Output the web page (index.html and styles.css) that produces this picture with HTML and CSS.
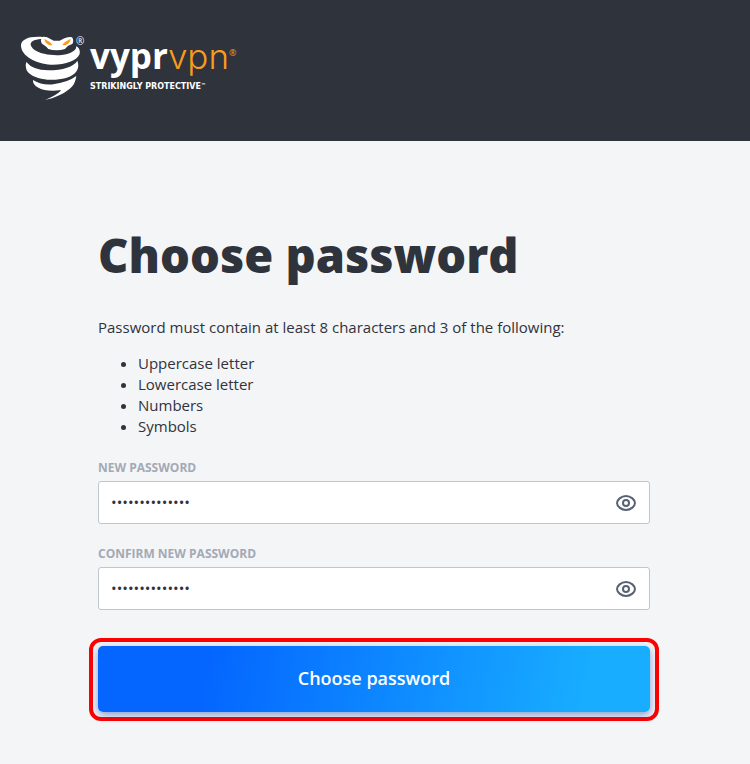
FILE: index.html
```html
<!DOCTYPE html>
<html lang="en">
<head>
<meta charset="utf-8">
<meta name="viewport" content="width=device-width, initial-scale=1">
<title>Choose password</title>
<link rel="stylesheet" href="styles.css">
</head>
<body>
<header class="header">
  <a class="logo" href="#" aria-label="VyprVPN">
    <svg class="logo-mark" viewBox="0 0 225 225" aria-hidden="true">
      <g fill="#fff">
        <path d="M84 21C42 18 17 28 18 48C20 78 62 102 108 104C150 105 186 92 194 72C196 60 192 52 183 49C187 60 168 72 140 75C112 78 76 72 60 61C42 48 44 36 58 31C66 28 76 27 84 27Z"/>
        <path d="M82 21Q94 19 105 26L116 32H134L145 26Q160 19 171 22Q178 31 172 42C160 46 156 50 150 57Q138 61 125 61Q111 61 100 57C94 49 87 45 81 41Q74 31 82 21Z"/>
        <path d="M34 96Q53 120 99 121C144 121 176 110 187 92C196 115 184 134 153 144C101 158 36 143 33 113Q31 104 34 96Z"/>
        <path d="M54 150Q84 168 119 162Q158 157 184 138C181 158 174 171 158 181C143 193 119 204 91 210C116 198 132 190 138 180C91 189 50 171 54 150Z"/>
      </g>
      <path fill="#f89c1c" d="M88 26Q90 39 101 44Q108 47 112 44Q104 34 88 26ZM167 26Q165 39 154 44Q147 47 142 44Q150 34 167 26Z"/>
    </svg>
    <span class="logo-text">
      <span class="logo-name"><span class="logo-reg-small">®</span><b class="logo-vypr">vypr</b><span class="logo-vpn">vpn</span><span class="logo-reg">®</span></span>
      <span class="logo-tagline">STRIKINGLY PROTECTIVE<span class="tagline-mark">™</span></span>
    </span>
  </a>
</header>
<main class="main">
  <h1 class="title">Choose password</h1>
  <p class="intro">Password must contain at least 8 characters and 3 of the following:</p>
  <ul class="rules">
    <li>Uppercase letter</li>
    <li>Lowercase letter</li>
    <li>Numbers</li>
    <li>Symbols</li>
  </ul>
  <form class="form">
    <div class="field">
      <label class="label" for="new-password">NEW PASSWORD</label>
      <div class="control">
        <input class="input" id="new-password" type="password" value="abcdefghijklmn">
        <button class="reveal" type="button" aria-label="Show new password">
          <svg viewBox="0 0 24 24" aria-hidden="true"><path d="M3 12C3 9 7 5 12 5S21 9 21 12S17 19 12 19S3 15 3 12Z"/><circle cx="12" cy="12" r="3"/></svg>
        </button>
      </div>
    </div>
    <div class="field">
      <label class="label" for="confirm-password">CONFIRM NEW PASSWORD</label>
      <div class="control">
        <input class="input" id="confirm-password" type="password" value="abcdefghijklmn">
        <button class="reveal" type="button" aria-label="Show confirmed password">
          <svg viewBox="0 0 24 24" aria-hidden="true"><path d="M3 12C3 9 7 5 12 5S21 9 21 12S17 19 12 19S3 15 3 12Z"/><circle cx="12" cy="12" r="3"/></svg>
        </button>
      </div>
    </div>
    <div class="highlight"><button class="submit" type="submit">Choose password</button></div>
  </form>
</main>
</body>
</html>
```
FILE: styles.css
```css
* { box-sizing: border-box; }

body {
  margin: 0;
  background: #f4f5f7;
  color: #2f333c;
  font: 15px/21px "Open Sans", sans-serif;
}

.header {
  display: flex;
  padding: 30px 15px 36px;
  background: #2f333c;
}

.logo {
  display: flex;
  color: #fff;
  text-decoration: none;
}

.logo-mark {
  width: 75px;
  height: 75px;
}

.logo-text { padding-top: 4px; }

.logo-name {
  position: relative;
  display: flex;
  align-items: baseline;
  height: 46px;
  line-height: 44px;
}

.logo-vypr {
  font-size: 35px;
}

.logo-vpn {
  color: #f89c1c;
  font-family: Inter, sans-serif;
  font-size: 35px;
  font-weight: 300;
}

.logo-reg {
  align-self: flex-start;
  padding-top: 10px;
  color: #f89c1c;
  font-size: 9px;
  line-height: 18px;
}

.logo-reg-small {
  position: absolute;
  top: 2px;
  left: -14px;
  font-size: 10px;
  line-height: 10px;
}

.logo-tagline {
  display: flex;
  align-items: flex-start;
  font: 700 8px/14px "DejaVu Sans", sans-serif;
}

.tagline-mark {
  font-size: 5px;
  line-height: 10px;
}

.main {
  max-width: 634px;
  margin: 0 auto;
  padding: 80px 42px 43px 40px;
}

.title {
  margin: 0 0 28px;
  font-size: 47px;
  font-weight: 800;
  line-height: 68px;
}

.intro { margin: 0 0 15px; }

.rules {
  margin: 0 0 21px;
  padding-left: 40px;
}

.field { margin-bottom: 20px; }

.label {
  display: block;
  margin-bottom: 3px;
  color: #a3a9b5;
  font-size: 12px;
  font-weight: 700;
  line-height: 20px;
}

.control {
  display: flex;
  align-items: center;
  height: 43px;
  padding: 0 11px 0 12px;
  border: 1px solid #c1c5ce;
  border-radius: 3px;
  background: #fff;
}

.input {
  flex: 1;
  min-width: 0;
  padding: 0;
  border: 0;
  outline: 0;
  background: none;
  color: #2f333c;
  font: 15px/21px "Open Sans", sans-serif;
}

.reveal {
  width: 24px;
  height: 24px;
  padding: 0;
  border: 0;
  background: none;
}

.reveal svg {
  display: block;
  fill: none;
  stroke: #596273;
  stroke-width: 2;
}

.highlight {
  margin: 28px -9px 0;
  padding: 4px 5px 5px;
  border: 4px solid #f00;
  border-radius: 12px;
}

.submit {
  display: block;
  width: 100%;
  height: 66px;
  padding: 0 0 2px;
  border: 0;
  border-radius: 5px;
  background: linear-gradient(100deg, #0466ff 20%, #18adff 88%);
  box-shadow: 0 3px 8px rgba(20, 70, 170, 0.5);
  color: #fff;
  font: 600 18px/24px "Open Sans", sans-serif;
}
```
